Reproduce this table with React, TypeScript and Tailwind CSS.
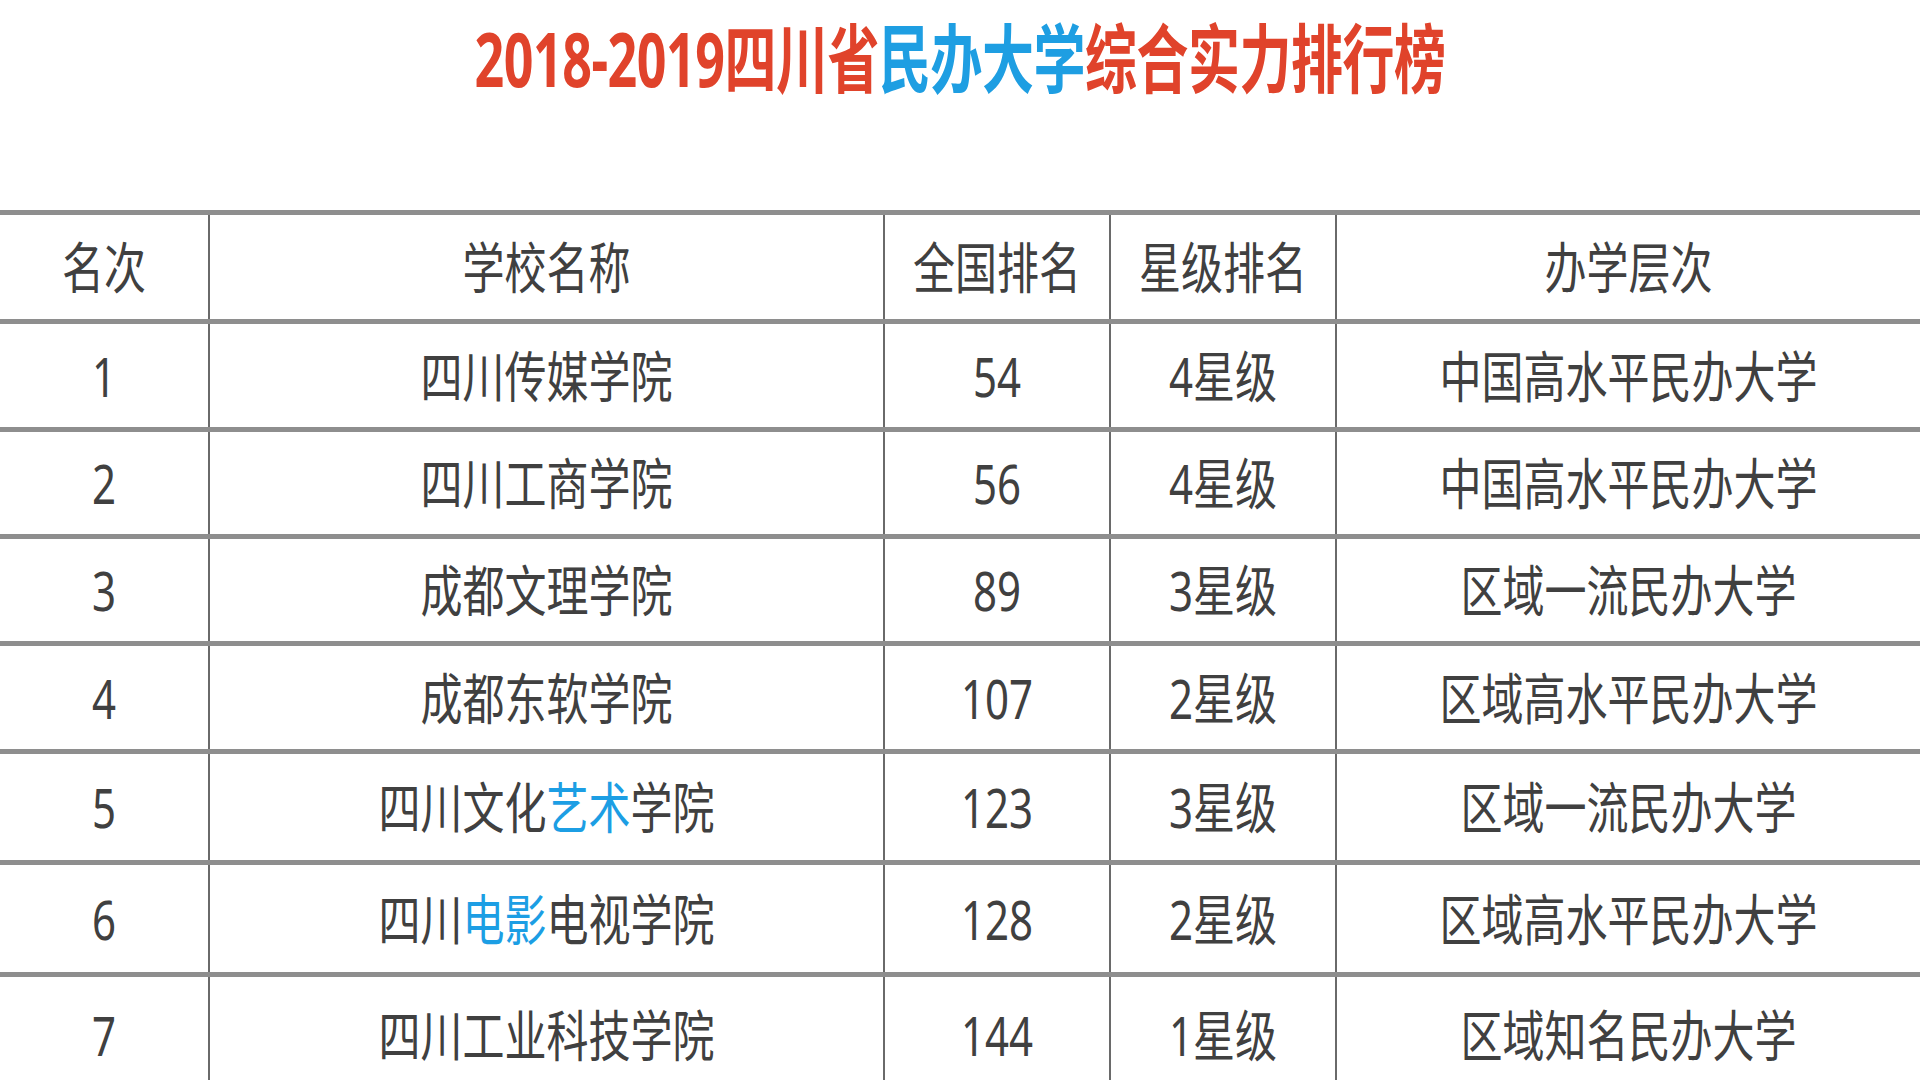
const font = { fontFamily: '"Noto Sans", "Noto Sans CJK SC", sans-serif' }

type Row = {
  no: string
  name: React.ReactNode
  rank: string
  star: string
  level: string
  h: string
}

const Blue = ({ children }: { children: React.ReactNode }) => (
  <span className="text-[#1c9ee4]">{children}</span>
)

const rows: Row[] = [
  { no: '1', name: '四川传媒学院', rank: '54', star: '4星级', level: '中国高水平民办大学', h: 'h-[108px]' },
  { no: '2', name: '四川工商学院', rank: '56', star: '4星级', level: '中国高水平民办大学', h: 'h-[107px]' },
  { no: '3', name: '成都文理学院', rank: '89', star: '3星级', level: '区域一流民办大学', h: 'h-[107px]' },
  { no: '4', name: '成都东软学院', rank: '107', star: '2星级', level: '区域高水平民办大学', h: 'h-[108px]' },
  {
    no: '5',
    name: (
      <>
        四川文化<Blue>艺术</Blue>学院
      </>
    ),
    rank: '123',
    star: '3星级',
    level: '区域一流民办大学',
    h: 'h-[111px]',
  },
  {
    no: '6',
    name: (
      <>
        四川<Blue>电影</Blue>电视学院
      </>
    ),
    rank: '128',
    star: '2星级',
    level: '区域高水平民办大学',
    h: 'h-[112px]',
  },
  { no: '7', name: '四川工业科技学院', rank: '144', star: '1星级', level: '区域知名民办大学', h: 'h-[120px]' },
]

function Cell({ children, first }: { children: React.ReactNode; first?: boolean }) {
  return (
    <div
      className={
        'flex items-center justify-center h-full ' +
        (first ? '' : 'border-l-2 border-[#6a6a6a]')
      }
    >
      <span className="inline-block scale-y-[1.3] text-[42px] leading-none text-[#404040]">{children}</span>
    </div>
  )
}

function TableRow({ cells, h }: { cells: React.ReactNode[]; h: string }) {
  return (
    <div
      className={
        'grid grid-cols-[208px_675px_226px_226px_585px] border-t-[5px] border-[#8e8e8e] ' + h
      }
    >
      {cells.map((c, i) => (
        <Cell key={i} first={i === 0}>
          {c}
        </Cell>
      ))}
    </div>
  )
}

export default function App() {
  return (
    <div className="w-full h-[1080px] overflow-hidden bg-white" style={font}>
      <div className="h-[210px] flex justify-center pt-[14px]">
        <h1 className="inline-block h-fit scale-y-[1.45] origin-top text-[52px] font-bold leading-none tracking-[-0.5px] text-[#e0432b] pt-[4px]">
          2018-2019四川省<span className="text-[#1e9ee2]">民办大学</span>综合实力排行榜
        </h1>
      </div>
      <TableRow h="h-[109px]" cells={['名次', '学校名称', '全国排名', '星级排名', '办学层次']} />
      {rows.map((r) => (
        <TableRow key={r.no} h={r.h} cells={[r.no, r.name, r.rank, r.star, r.level]} />
      ))}
    </div>
  )
}
